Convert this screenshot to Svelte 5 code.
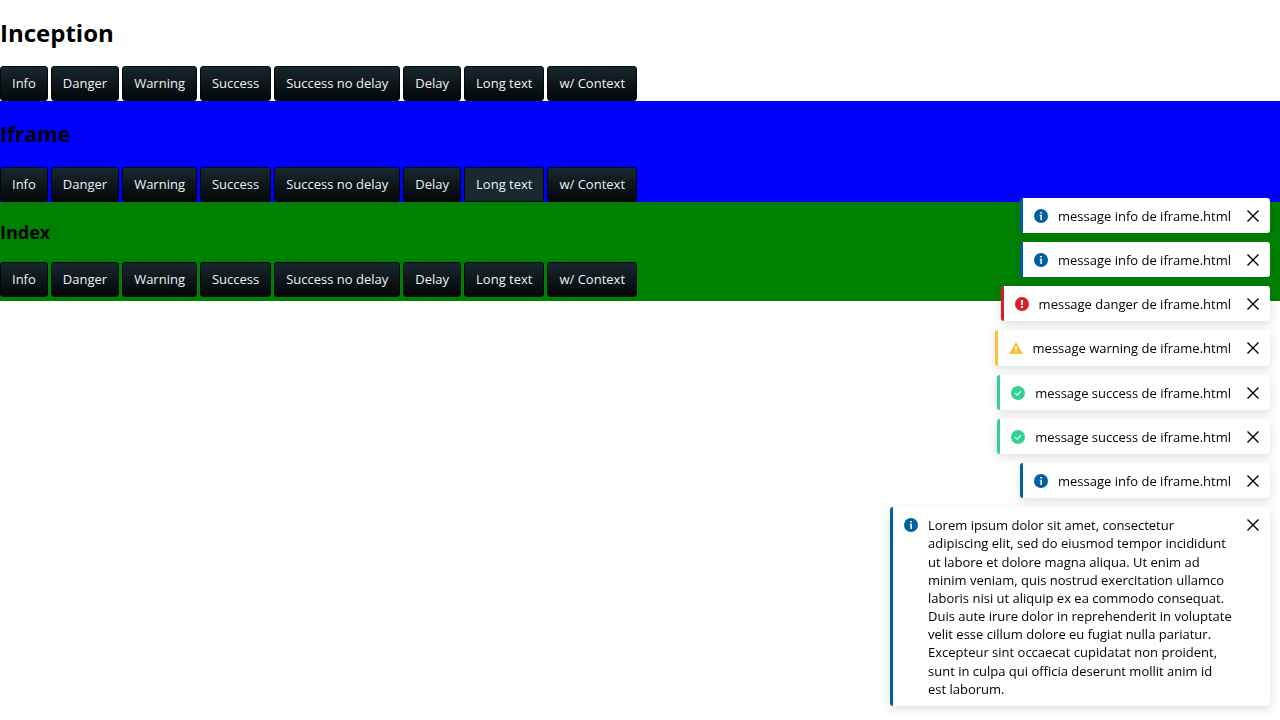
<script>
  const actions = ['Info', 'Danger', 'Warning', 'Success', 'Success no delay', 'Delay', 'Long text', 'w/ Context'];
  const lorem = [
    'Lorem ipsum dolor sit amet, consectetur',
    'adipiscing elit, sed do eiusmod tempor incididunt',
    'ut labore et dolore magna aliqua. Ut enim ad',
    'minim veniam, quis nostrud exercitation ullamco',
    'laboris nisi ut aliquip ex ea commodo consequat.',
    'Duis aute irure dolor in reprehenderit in voluptate',
    'velit esse cillum dolore eu fugiat nulla pariatur.',
    'Excepteur sint occaecat cupidatat non proident,',
    'sunt in culpa qui officia deserunt mollit anim id',
    'est laborum.'
  ].join('\n');

  let active = $state('iframe/Long text');
  let toasts = $state([
    { id: 1, type: 'info', text: 'message info de iframe.html' },
    { id: 2, type: 'info', text: 'message info de iframe.html' },
    { id: 3, type: 'danger', text: 'message danger de iframe.html' },
    { id: 4, type: 'warning', text: 'message warning de iframe.html' },
    { id: 5, type: 'success', text: 'message success de iframe.html' },
    { id: 6, type: 'success', text: 'message success de iframe.html' },
    { id: 7, type: 'info', text: 'message info de iframe.html' },
    { id: 8, type: 'info', text: lorem }
  ]);

  function dismiss(id) {
    toasts = toasts.filter((t) => t.id !== id);
  }
</script>

{#snippet buttons(frame)}
  <div class="actions">
    {#each actions as label}
      <button
        type="button"
        class="action"
        class:active={active === `${frame}/${label}`}
        onclick={() => (active = `${frame}/${label}`)}>{label}</button>
    {/each}
  </div>
{/snippet}

<main>
  <section class="inception">
    <h1>Inception</h1>
    {@render buttons('inception')}
  </section>
  <section class="iframe">
    <h2>Iframe</h2>
    {@render buttons('iframe')}
  </section>
  <section class="index">
    <h3>Index</h3>
    {@render buttons('index')}
  </section>
</main>

<div class="toasts" role="status">
  {#each toasts as toast (toast.id)}
    <div class="toast {toast.type}">
      <svg class="icon" viewBox="0 0 14 14" aria-hidden="true">
        {#if toast.type === 'info'}
          <circle cx="7" cy="7" r="7" fill="currentColor" />
          <path d="M6.2 3h1.7v1.6H6.2zM5.7 5.8h2.2V11H6.4V6.8h-.7z" fill="#fff" />
        {:else if toast.type === 'danger'}
          <circle cx="7" cy="7" r="7" fill="currentColor" />
          <path d="M6.1 3h1.8v5H6.1zM6.1 9h1.8v2H6.1z" fill="#fff" />
        {:else if toast.type === 'warning'}
          <path d="M7 1l7 12H0z" fill="currentColor" />
          <path d="M6.3 5.4h1.4v3.6H6.3zM6.3 10h1.4v1.4H6.3z" fill="#fff" />
        {:else}
          <circle cx="7" cy="7" r="7" fill="currentColor" />
          <path d="M4.1 7.1l2 2 3.8-3.8" fill="none" stroke="#fff" stroke-width="1.2" />
        {/if}
      </svg>
      <p>{toast.text}</p>
      <button type="button" class="close" aria-label="Close" onclick={() => dismiss(toast.id)}>
        <svg viewBox="0 0 12 12" aria-hidden="true">
          <path d="M.5.5l11 11M11.5.5l-11 11" fill="none" stroke="currentColor" stroke-width="1.4" />
        </svg>
      </button>
    </div>
  {/each}
</div>

<style>
  :global(body) {
    margin: 0;
    background: #fff;
    color: #000;
    font-family: 'Open Sans', sans-serif;
    font-size: 13px;
    line-height: 1.4;
  }

  .iframe {
    background: #00f;
  }

  .index {
    padding-bottom: 4px;
    background: #008000;
  }

  h1,
  h2,
  h3 {
    margin: 0;
    padding: 16px 0;
    font-weight: 700;
  }

  h1 {
    font-size: 24px;
    line-height: 34px;
  }

  h2 {
    font-size: 21px;
    line-height: 34px;
  }

  h3 {
    font-size: 18px;
    line-height: 28px;
  }

  .actions {
    display: flex;
    flex-wrap: wrap;
    gap: 3px;
  }

  .action {
    box-sizing: border-box;
    height: 35px;
    padding: 0 11px;
    border: 1px solid #04080a;
    border-radius: 3px;
    background: linear-gradient(#17282f, #030607);
    color: #f0f2f2;
    font: inherit;
    white-space: nowrap;
    cursor: pointer;
  }

  .action.active {
    background: #17282f;
  }

  .toasts {
    position: fixed;
    right: 10px;
    bottom: 14px;
    display: flex;
    flex-direction: column;
    align-items: flex-end;
    gap: 9px;
  }

  .toast {
    display: flex;
    align-items: flex-start;
    box-sizing: border-box;
    max-width: 380px;
    padding: 9px 0 8px 11px;
    border-left: 3px solid currentColor;
    border-radius: 3px;
    background: #fff;
    box-shadow: 0 3px 10px rgba(23, 40, 47, 0.15);
  }

  .info {
    color: #005f9e;
  }

  .danger {
    color: #da1e28;
  }

  .warning {
    color: #fdbf40;
  }

  .success {
    color: #32d296;
  }

  .icon {
    flex: none;
    width: 14px;
    height: 14px;
    margin: 2px 10px 0 0;
  }

  p {
    min-width: 0;
    margin: 0;
    color: #000;
    white-space: pre;
  }

  .close {
    display: flex;
    flex: none;
    align-items: center;
    justify-content: center;
    width: 34px;
    height: 18px;
    margin-left: 5px;
    padding: 0;
    border: 0;
    background: none;
    color: #000;
    cursor: pointer;
  }

  .close svg {
    width: 12px;
    height: 12px;
  }
</style>
